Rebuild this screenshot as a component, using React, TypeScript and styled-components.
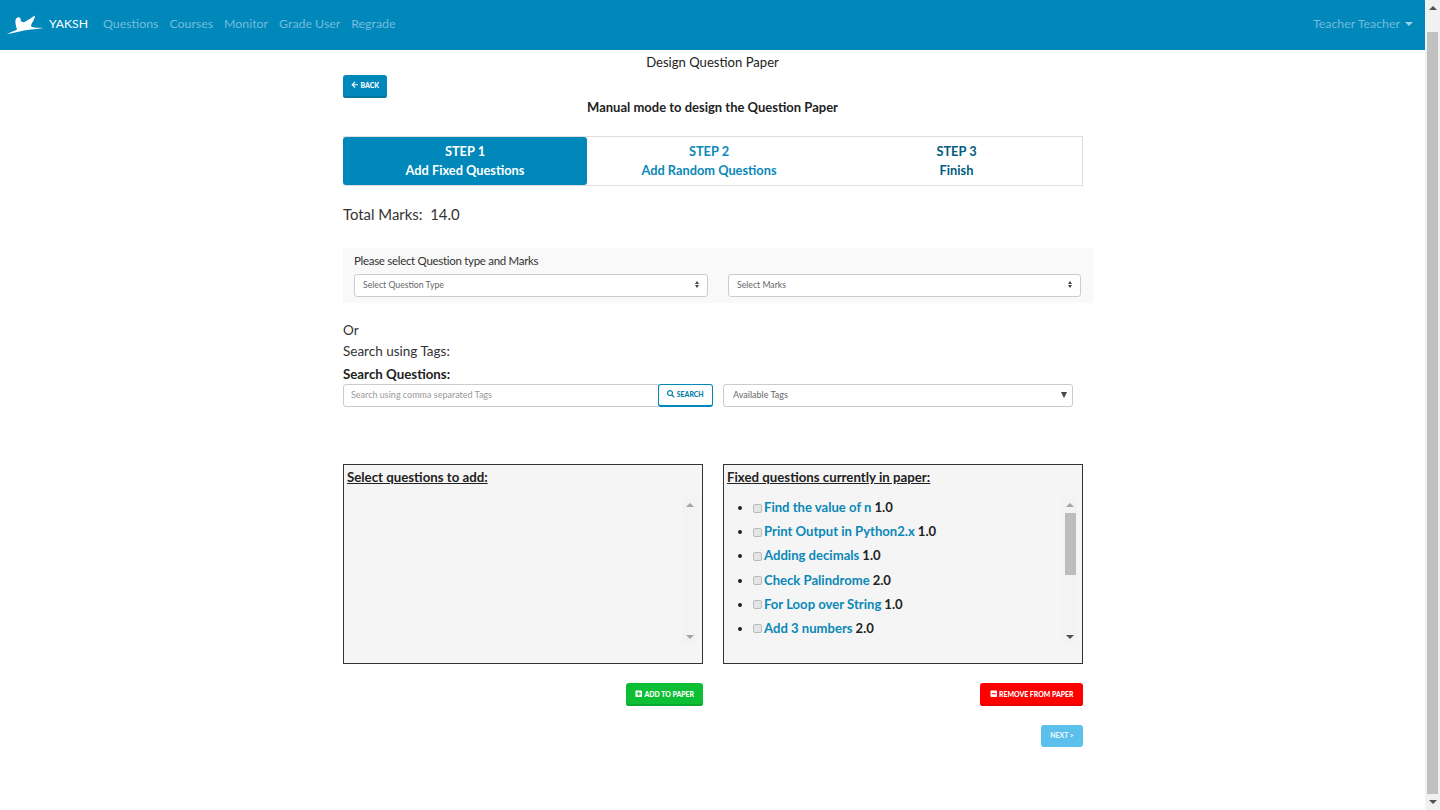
import React from "react";
import styled, { createGlobalStyle } from "styled-components";
import { FaArrowLeft, FaSearch, FaPlusSquare, FaMinusSquare } from "react-icons/fa";

const Global = createGlobalStyle`
  html, body { margin: 0; padding: 0; height: 810px; overflow: hidden; background: #fff; }
  * { box-sizing: border-box; }
  body { font-family: "Lato", "Liberation Sans", sans-serif; color: #222; font-size: 14px; }
`;

const Shell = styled.div`
  display: flex;
  width: 1440px;
  height: 810px;
  overflow: hidden;
`;
const Page = styled.div`
  width: 1425px;
  display: flex;
  flex-direction: column;
  height: 810px;
  overflow: hidden;
`;
const PageRail = styled.div`
  width: 15px;
  height: 810px;
  background: #f1f1f1;
  display: flex;
  flex-direction: column;
  align-items: stretch;
  flex: none;
`;
const ArrowBox = styled.div<{ $h: number }>`
  height: ${(p) => p.$h}px;
  display: flex;
  align-items: center;
  justify-content: center;
  flex: none;
`;
const Tri = styled.span<{ $down?: boolean; $c?: string }>`
  width: 0;
  height: 0;
  border-left: 4px solid transparent;
  border-right: 4px solid transparent;
  ${(p) =>
    p.$down
      ? `border-top: 4px solid ${p.$c || "#505050"};`
      : `border-bottom: 4px solid ${p.$c || "#505050"};`}
`;
const PageThumb = styled.div`
  flex: 1;
  background: #c1c1c1;
  margin: 0 2px;
`;
const Nav = styled.nav`
  height: 50px;
  background: #0088bb;
  display: flex;
  align-items: center;
  padding: 0 12px 3px 6px;
  flex: none;
`;
const Brand = styled.div`
  display: flex;
  align-items: center;
  color: #fff;
  font-size: 12.2px;
  margin-right: 15px;
  svg { margin: 3px 5px 0 0; }
`;
const NavLink = styled.span`
  color: #75bcdc;
  font-size: 12.35px;
  margin-right: 11px;
`;
const User = styled.span`
  margin-left: auto;
  color: #75bcdc;
  font-size: 12.35px;
  display: flex;
  align-items: center;
  gap: 5px;
`;
const Caret = styled.span`
  width: 0;
  height: 0;
  border-left: 4.5px solid transparent;
  border-right: 4.5px solid transparent;
  border-top: 4.5px solid #9fd0e6;
`;
const Main = styled.main`
  width: 740px;
  margin: 0 auto;
  position: relative;
  left: 0.5px;
`;
const PageTitle = styled.div`
  text-align: center;
  font-size: 13.1px;
  line-height: 20px;
  height: 20px;
  margin-top: 2px;
  margin-left: -1px;
`;
const BaseBtn = styled.button`
  font-family: inherit;
  font-weight: 900;
  font-size: 6.9px;
  text-transform: uppercase;
  color: #fff;
  border: 0;
  border-radius: 3px;
  display: inline-flex;
  align-items: center;
  justify-content: center;
  gap: 2px;
  padding: 0 0 2px;
  svg { font-size: 7.5px; }
`;
const BackBtn = styled(BaseBtn)`
  background: #0088bb;
  width: 44px;
  height: 23px;
  margin-top: 3px;
  padding-bottom: 3px;
  display: flex;
  box-shadow: inset 0 -2px 0 #00769f;
`;
const Heading = styled.div`
  text-align: center;
  font-weight: 700;
  font-size: 13px;
  line-height: 18px;
  margin-left: -1px;
`;
const Tabs = styled.div`
  display: grid;
  grid-template-columns: 244px 244px 1fr;
  height: 50px;
  margin-top: 20px;
  border: 1px solid #ddd;
  border-left: 0;
`;
const Tab = styled.div<{ $active?: boolean; $dark?: boolean }>`
  display: flex;
  flex-direction: column;
  align-items: center;
  justify-content: center;
  font-weight: 700;
  font-size: 12.8px;
  line-height: 19px;
  color: ${(p) => (p.$active ? "#fff" : p.$dark ? "#005c80" : "#0a88b8")};
  background: ${(p) => (p.$active ? "#0088bb" : "transparent")};
  border-radius: ${(p) => (p.$active ? "3px" : "0")};
`;
const Total = styled.div`
  font-size: 14.9px;
  line-height: 22px;
  margin-top: 17px;
  white-space: pre;
  color: #333;
`;
const Filter = styled.div`
  width: 750px;
  height: 55px;
  margin-top: 23px;
  background: #f9f9f9;
  padding: 4px 12px 0 11px;
`;
const FilterLabel = styled.div`
  font-size: 11.5px;
  letter-spacing: -0.3px;
  line-height: 17px;
  color: #333;
`;
const FilterRow = styled.div`
  display: grid;
  grid-template-columns: 354px 353px;
  gap: 20px;
  margin-top: 5px;
`;
const FakeSelect = styled.div`
  height: 23px;
  background: #fff;
  border: 1px solid #ccc;
  border-radius: 3px;
  font-size: 8.7px;
  color: #666;
  display: flex;
  align-items: center;
  justify-content: space-between;
  padding: 0 8px 2px;
`;
const Updown = styled.span`
  display: flex;
  flex-direction: column;
  gap: 1px;
`;
const SmallUp = styled.span`
  width: 0;
  height: 0;
  border-left: 2.5px solid transparent;
  border-right: 2.5px solid transparent;
  border-bottom: 3px solid #444;
`;
const SmallDown = styled.span`
  width: 0;
  height: 0;
  border-left: 2.5px solid transparent;
  border-right: 2.5px solid transparent;
  border-top: 3px solid #444;
`;
const Or = styled.div`
  font-size: 13.5px;
  line-height: 21px;
  margin-top: 17px;
  color: #333;
`;
const SearchLabel = styled.div`
  font-size: 13.5px;
  line-height: 21px;
  color: #333;
`;
const SearchTitle = styled.div`
  font-size: 13.3px;
  font-weight: 700;
  line-height: 18px;
  margin-top: 3px;
`;
const SearchRow = styled.div`
  display: flex;
  align-items: flex-start;
  margin-top: 1px;
`;
const SearchInput = styled.div`
  width: 316px;
  height: 23px;
  border: 1px solid #ccc;
  border-radius: 3px 0 0 3px;
  background: #fff;
  font-size: 9px;
  color: #999;
  display: flex;
  align-items: center;
  padding: 0 0 2px 7px;
`;
const SearchBtn = styled(BaseBtn)`
  width: 55px;
  height: 23px;
  background: #fff;
  color: #0a7ea8;
  border: 1px solid #0088bb;
  border-bottom-width: 2px;
  border-radius: 3px;
  margin-left: -1px;
  margin-right: 10px;
`;
const TagSelect = styled(FakeSelect)`
  width: 350px;
  font-size: 9px;
  padding-left: 9px;
  padding-right: 5px;
`;
const TagArrow = styled.span`
  width: 0;
  height: 0;
  border-left: 3px solid transparent;
  border-right: 3px solid transparent;
  border-top: 6px solid #444;
`;
const Panels = styled.div`
  display: grid;
  grid-template-columns: 360px 360px;
  gap: 20px;
  margin-top: 57px;
`;
const Panel = styled.section`
  height: 200px;
  background: #f5f5f5;
  border: 1px solid #333;
  padding: 3px 3px 0;
`;
const PanelTitle = styled.div`
  font-weight: 700;
  font-size: 13.25px;
  line-height: 18px;
  text-decoration: underline;
`;
const ScrollArea = styled.div`
  display: flex;
  height: 148px;
  margin-top: 11px;
`;
const List = styled.ul`
  flex: 1;
  margin: 0;
  padding: 0 0 0 26px;
  list-style: disc;
`;
const Item = styled.li`
  height: 24.2px;
  line-height: 20px;
  font-weight: 700;
  font-size: 13.1px;
  white-space: nowrap;
`;
const Box = styled.input`
  width: 9px;
  height: 9px;
  margin: 0 2px 0 0;
  vertical-align: -0.5px;
  appearance: none;
  background: #e4e4e4;
  border: 1px solid #bbb;
  border-radius: 2px;
`;
const QLink = styled.a`
  color: #0a88b8;
  margin-right: 3px;
`;
const Rail = styled.div`
  width: 15px;
  margin-right: 2px;
  display: flex;
  flex-direction: column;
  flex: none;
  background: #f3f3f3;
`;
const Thumb = styled.div`
  height: 62px;
  background: #bcbcbc;
  margin: 0 1px 0 3px;
`;
const RailFill = styled.div`
  flex: 1;
`;
const ActionGrid = styled.div`
  display: grid;
  grid-template-columns: 360px 360px;
  gap: 20px;
  margin-top: 19px;
  justify-items: end;
`;
const AddBtn = styled(BaseBtn)`
  width: 77px;
  height: 23px;
  background: #0cbf34;
  box-shadow: inset 0 -2px 0 #0aa82d;
`;
const RemoveBtn = styled(BaseBtn)`
  width: 103px;
  height: 23px;
  background: #ff0000;
  box-shadow: inset 0 -2px 0 #e60000;
`;
const NextRow = styled.div`
  display: flex;
  justify-content: flex-end;
  margin-top: 19px;
`;
const NextBtn = styled(BaseBtn)`
  width: 42px;
  height: 22px;
  background: #5bc0eb;
  color: #e6f6fc;
`;

const Bird = () => (
  <svg width="38" height="20" viewBox="0 0 38 20" aria-hidden="true">
    <path
      fill="#fff"
      d="M0.5 19 C4 17.5 8 16 11 14.5 C10 11 9 8 9.5 5 C10 3 12 1.5 13.5 2.5 C15 3.5 14.5 5 15 6 C16 7.5 18 7.5 19.5 6.5 C22 5 25 3 29 0.5 C29 3 27.5 5.5 26 8 C25 10 24.5 11.5 26 12 C29 13 33 12.5 37.5 13 C31 14 24 14.5 18 15.5 C12 16.5 6 18.5 0.5 19 Z"
    />
  </svg>
);

const questions: [string, string][] = [
  ["Find the value of n", "1.0"],
  ["Print Output in Python2.x", "1.0"],
  ["Adding decimals", "1.0"],
  ["Check Palindrome", "2.0"],
  ["For Loop over String", "1.0"],
  ["Add 3 numbers", "2.0"],
];

export default function App() {
  return (
    <Shell>
      <Global />
      <Page>
        <Nav>
          <Brand>
            <Bird />
            YAKSH
          </Brand>
          <NavLink>Questions</NavLink>
          <NavLink>Courses</NavLink>
          <NavLink>Monitor</NavLink>
          <NavLink>Grade User</NavLink>
          <NavLink>Regrade</NavLink>
          <User>
            Teacher Teacher <Caret />
          </User>
        </Nav>
        <Main>
          <PageTitle>Design Question Paper</PageTitle>
          <BackBtn>
            <FaArrowLeft /> Back
          </BackBtn>
          <Heading>Manual mode to design the Question Paper</Heading>
          <Tabs>
            <Tab $active>
              <span>STEP 1</span>
              <span>Add Fixed Questions</span>
            </Tab>
            <Tab>
              <span>STEP 2</span>
              <span>Add Random Questions</span>
            </Tab>
            <Tab $dark>
              <span>STEP 3</span>
              <span>Finish</span>
            </Tab>
          </Tabs>
          <Total>{"Total Marks:  14.0"}</Total>
          <Filter>
            <FilterLabel>Please select Question type and Marks</FilterLabel>
            <FilterRow>
              <FakeSelect>
                Select Question Type
                <Updown>
                  <SmallUp />
                  <SmallDown />
                </Updown>
              </FakeSelect>
              <FakeSelect>
                Select Marks
                <Updown>
                  <SmallUp />
                  <SmallDown />
                </Updown>
              </FakeSelect>
            </FilterRow>
          </Filter>
          <Or>Or</Or>
          <SearchLabel>Search using Tags:</SearchLabel>
          <SearchTitle>Search Questions:</SearchTitle>
          <SearchRow>
            <SearchInput>Search using comma separated Tags</SearchInput>
            <SearchBtn>
              <FaSearch /> Search
            </SearchBtn>
            <TagSelect>
              Available Tags
              <TagArrow />
            </TagSelect>
          </SearchRow>
          <Panels>
            <Panel>
              <PanelTitle>Select questions to add:</PanelTitle>
              <ScrollArea>
                <List />
                <Rail>
                  <ArrowBox $h={16}>
                    <Tri $c="#a3a3a3" />
                  </ArrowBox>
                  <RailFill />
                  <ArrowBox $h={16}>
                    <Tri $down $c="#a3a3a3" />
                  </ArrowBox>
                </Rail>
              </ScrollArea>
            </Panel>
            <Panel>
              <PanelTitle>Fixed questions currently in paper:</PanelTitle>
              <ScrollArea>
                <List>
                  {questions.map(([q, m]) => (
                    <Item key={q}>
                      <Box type="checkbox" />
                      <QLink>{q}</QLink>
                      {m}
                    </Item>
                  ))}
                </List>
                <Rail>
                  <ArrowBox $h={16}>
                    <Tri $c="#a3a3a3" />
                  </ArrowBox>
                  <Thumb />
                  <RailFill />
                  <ArrowBox $h={16}>
                    <Tri $down $c="#505050" />
                  </ArrowBox>
                </Rail>
              </ScrollArea>
            </Panel>
          </Panels>
          <ActionGrid>
            <AddBtn>
              <FaPlusSquare /> Add to Paper
            </AddBtn>
            <RemoveBtn>
              <FaMinusSquare /> Remove from Paper
            </RemoveBtn>
          </ActionGrid>
          <NextRow>
            <NextBtn>Next &gt;</NextBtn>
          </NextRow>
        </Main>
      </Page>
      <PageRail>
        <ArrowBox $h={16}>
          <Tri />
        </ArrowBox>
        <ArrowBox $h={16} />
        <PageThumb />
        <ArrowBox $h={16}>
          <Tri $down />
        </ArrowBox>
      </PageRail>
    </Shell>
  );
}
